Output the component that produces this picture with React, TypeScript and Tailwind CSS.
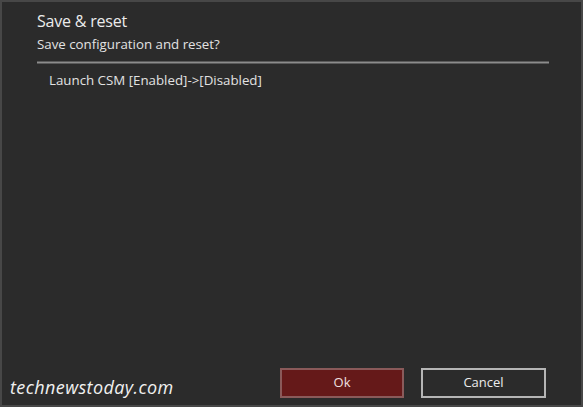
export default function App() {
  return (
    <div
      className="w-[583px] h-[407px] bg-[#2b2b2b] border-2 border-[#474747] flex flex-col text-[#e6e6e6]"
      style={{ fontFamily: '"Open Sans", "Noto Sans", sans-serif' }}
    >
      <div className="pl-[35px] pr-[32px] pt-[8px]">
        <h1 className="text-[16px] font-medium leading-[22px] text-[#ececec] tracking-[-0.2px]">Save &amp; reset</h1>
        <p className="text-[13.3px] leading-[18px] mt-[3px] text-[#e2e2e2]">Save configuration and reset?</p>
        <div className="mt-[8px] h-[3px] bg-[#8c8c8c] border-y border-[#5a5a5a]" />
        <p className="text-[13.3px] leading-[18px] mt-[7px] pl-[12px] text-[#e2e2e2]">
          Launch CSM [Enabled]-&gt;[Disabled]
        </p>
      </div>
      <div className="mt-auto flex items-end pb-[7px] pl-[8px] pr-[35px]">
        <span className="text-[18px] italic leading-[24px] text-[#f0f0f0] tracking-[0.4px] mb-[-1px]">technewstoday.com</span>
        <div className="ml-auto flex gap-[17px]">
          <button className="w-[124px] h-[30px] bg-[#651919] border-2 border-[#8a5a5a] text-[13px] text-[#f0e0e0]">
            Ok
          </button>
          <button className="w-[125px] h-[30px] bg-[#2b2b2b] border-2 border-[#b5b5b5] text-[13px] text-[#ececec]">
            Cancel
          </button>
        </div>
      </div>
    </div>
  );
}
